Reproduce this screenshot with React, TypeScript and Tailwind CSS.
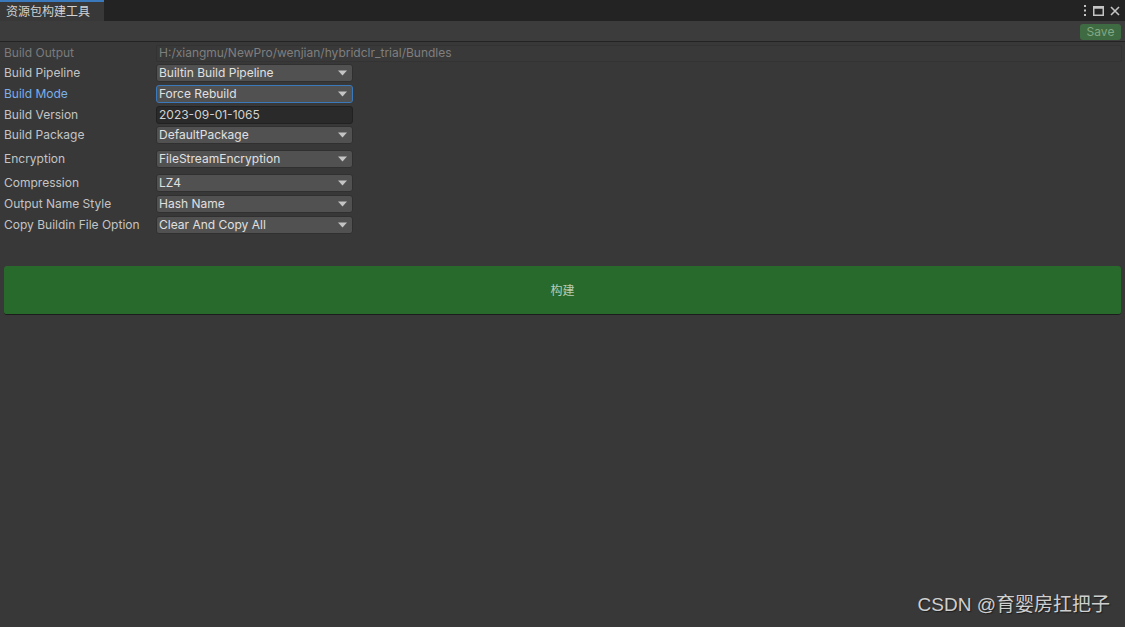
import React from 'react';

const font = { fontFamily: 'Inter, "Noto Sans CJK SC", sans-serif' };

interface Row {
    label: string;
    value: string;
    kind: 'text' | 'dropdown' | 'input';
    gap: string;
    active?: boolean;
    muted?: boolean;
}

const rows: Row[] = [
    { label: 'Build Pipeline', value: 'Builtin Build Pipeline', kind: 'dropdown', gap: 'mt-[2px]' },
    { label: 'Build Mode', value: 'Force Rebuild', kind: 'dropdown', gap: 'mt-[3px]', active: true },
    { label: 'Build Version', value: '2023-09-01-1065', kind: 'input', gap: 'mt-[3px]' },
    { label: 'Build Package', value: 'DefaultPackage', kind: 'dropdown', gap: 'mt-[2px]' },
    { label: 'Encryption', value: 'FileStreamEncryption', kind: 'dropdown', gap: 'mt-[6px]' },
    { label: 'Compression', value: 'LZ4', kind: 'dropdown', gap: 'mt-[6px]' },
    { label: 'Output Name Style', value: 'Hash Name', kind: 'dropdown', gap: 'mt-[3px]' },
    { label: 'Copy Buildin File Option', value: 'Clear And Copy All', kind: 'dropdown', gap: 'mt-[3px]' },
];

function Field({ row }: { row: Row }) {
    if (row.kind === 'input') {
        return (
            <div className="w-[197px] h-[18px] rounded-[3px] border border-[#212121] bg-[#2a2a2a] px-[2px] flex items-center text-[12px] text-[#d2d2d2]">
                {row.value}
            </div>
        );
    }
    return (
        <div
            className={`w-[197px] h-[18px] rounded-[3px] border ${
                row.active ? 'border-[#3a79bb]' : 'border-[#303030]'
            } bg-[#515151] pl-[2px] pr-[5px] flex items-center justify-between text-[12px] text-[#e0e0e0]`}
        >
            <span>{row.value}</span>
            <svg width="9" height="6" viewBox="0 0 9 6">
                <path d="M0 0.5h9L4.5 5.5z" fill="#c4c4c4" />
            </svg>
        </div>
    );
}

export default function App() {
    return (
        <div className="w-[1125px] h-[627px] bg-[#383838] flex flex-col relative overflow-hidden" style={font}>
            {/* Tab strip */}
            <div className="h-[21px] bg-[#232323] flex items-stretch justify-between">
                <div className="w-[104px] bg-[#383838] border-t-2 border-[#3a79bb] flex items-center pl-[6px] text-[12px] text-[#d2d2d2]">
                    资源包构建工具
                </div>
                <div className="flex items-center gap-[6px] pr-[5px] text-[#c4c4c4]">
                    <svg width="4" height="11" viewBox="0 0 4 11">
                        <rect x="1" y="0" width="2" height="2" fill="#c4c4c4" />
                        <rect x="1" y="4.5" width="2" height="2" fill="#c4c4c4" />
                        <rect x="1" y="9" width="2" height="2" fill="#c4c4c4" />
                    </svg>
                    <svg width="11" height="10" viewBox="0 0 11 10">
                        <rect x="0.75" y="0.75" width="9.5" height="8.5" fill="none" stroke="#c4c4c4" strokeWidth="1.5" />
                        <rect x="0.75" y="0.75" width="9.5" height="2" fill="#c4c4c4" />
                    </svg>
                    <svg width="10" height="10" viewBox="0 0 10 10">
                        <path d="M1 1L9 9M9 1L1 9" stroke="#c4c4c4" strokeWidth="1.6" />
                    </svg>
                </div>
            </div>

            {/* Toolbar */}
            <div className="h-[21px] bg-[#3c3c3c] border-b border-[#232323] flex items-center justify-end pr-[4px] pt-[1px]">
                <div className="h-[16px] w-[41px] rounded-[3px] bg-[#3e6b41] flex items-center justify-center text-[12px] text-[#82a884]">
                    Save
                </div>
            </div>

            {/* Settings */}
            <div className="pt-[2px] pl-[4px] pr-[3px] text-[12px]">
                <div className="flex items-center h-[18px]">
                    <div className="w-[152px] text-[#7b7b7b]">Build Output</div>
                    <div className="flex-1 h-[17px] rounded-[2px] border border-[#333333] bg-[#393939] px-[2px] flex items-center text-[#7f7f7f]">
                        H:/xiangmu/NewPro/wenjian/hybridclr_trial/Bundles
                    </div>
                </div>
                {rows.map((row) => (
                    <div key={row.label} className={`flex items-center h-[18px] ${row.gap}`}>
                        <div className={`w-[152px] ${row.active ? 'text-[#7bafea]' : 'text-[#c4c4c4]'}`}>{row.label}</div>
                        <Field row={row} />
                    </div>
                ))}
            </div>

            {/* Build button */}
            <div className="mt-[32px] mx-[4px] h-[49px] rounded-[3px] bg-[#286a2b] border-b border-[#1c1c1c] flex items-center justify-center pt-[2px] text-[12px] text-[#b9cdb9]">
                构建
            </div>

            {/* Watermark */}
            <div
                className="absolute right-[15px] bottom-[8px] text-[19px] text-[#cfcfcf]"
                style={{ fontFamily: '"Liberation Sans", "Noto Sans CJK SC", sans-serif', textShadow: '1px 1px 1px #1e1e1e' }}
            >
                CSDN @育婴房扛把子
            </div>
        </div>
    );
}
